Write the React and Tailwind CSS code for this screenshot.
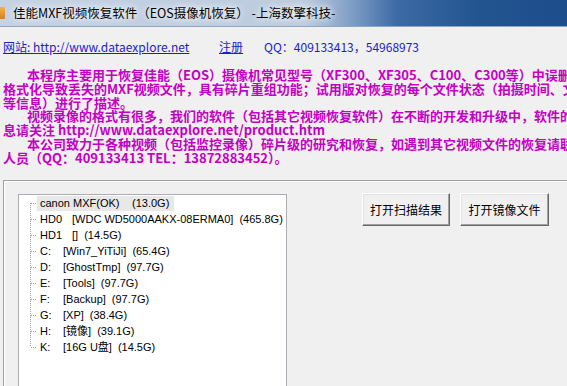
import React from 'react';

const cjk = "font-['Noto_Sans_CJK_SC',sans-serif]";
const ui = "font-['Liberation_Sans','Noto_Sans_CJK_SC',sans-serif]";

const paraLines = [
  { indent: true, text: '本程序主要用于恢复佳能（EOS）摄像机常见型号（XF300、XF305、C100、C300等）中误删除、格式化' },
  { indent: false, text: '格式化导致丢失的MXF视频文件，具有碎片重组功能；试用版对恢复的每个文件状态（拍摄时间、文件大小' },
  { indent: false, text: '等信息）进行了描述。' },
  { indent: true, text: '视频录像的格式有很多，我们的软件（包括其它视频恢复软件）在不断的开发和升级中，软件的最新信' },
  { indent: false, text: '息请关注 http://www.dataexplore.net/product.htm' },
  { indent: true, text: '本公司致力于各种视频（包括监控录像）碎片级的研究和恢复，如遇到其它视频文件的恢复请联系技术' },
  { indent: false, text: '人员（QQ：409133413 TEL：13872883452）。' }
];

const drives = [
  { name: 'canon MXF(OK)', label: '', size: '(13.0G)', nameW: 'w-[92px]', selected: true },
  { name: 'HD0', label: '[WDC WD5000AAKX-08ERMA0]', size: '(465.8G)', nameW: 'w-[32px]' },
  { name: 'HD1', label: '[]', size: '(14.5G)', nameW: 'w-[32px]' },
  { name: 'C:', label: '[Win7_YiTiJi]', size: '(65.4G)', nameW: 'w-[23px]' },
  { name: 'D:', label: '[GhostTmp]', size: '(97.7G)', nameW: 'w-[23px]' },
  { name: 'E:', label: '[Tools]', size: '(97.7G)', nameW: 'w-[23px]' },
  { name: 'F:', label: '[Backup]', size: '(97.7G)', nameW: 'w-[23px]' },
  { name: 'G:', label: '[XP]', size: '(38.4G)', nameW: 'w-[23px]' },
  { name: 'H:', label: '[镜像]', size: '(39.1G)', nameW: 'w-[23px]' },
  { name: 'K:', label: '[16G U盘]', size: '(14.5G)', nameW: 'w-[23px]' }
];

// dotted tree connector for one row
function Connector({ first, last }) {
  const y1 = first ? 8 : 0;
  const y2 = last ? 8 : 16;
  return (
    <svg width="7" height="16" className="shrink-0" shapeRendering="crispEdges">
      <line x1="0.5" y1={y1} x2="0.5" y2={y2} stroke="#a0a0a0" strokeDasharray="1 1" />
      <line x1="1" y1="8.5" x2="7" y2="8.5" stroke="#a0a0a0" strokeDasharray="1 1" />
    </svg>
  );
}

function WinButton({ children, w }) {
  return (
    <button
      className={`${w} h-[33px] bg-[#f0f0f0] border border-t-white border-l-white border-r-[#696969] border-b-[#696969] shadow-[inset_-1px_-1px_0_#a0a0a0,inset_1px_1px_0_#e3e3e3] text-[12px] text-black ${cjk}`}
    >
      {children}
    </button>
  );
}

export default function App() {
  return (
    <div className="w-[567px] h-[386px] overflow-hidden bg-[#f0f0f0] flex flex-col">
      {/* Title bar */}
      <div className="h-[27px] shrink-0 flex items-center border-b border-[#8fa6c2] bg-[linear-gradient(to_right,#c4d2e3_0%,#bccbde_54%,#7f9ec6_62%,#3d6aa5_70%,#235590_84%,#1d4d8b_100%)]">
        <div className="w-[5px] h-[12px] bg-[linear-gradient(to_bottom,#f3b54a,#d77f1c)] rounded-r-[1px]" />
        <span className={`ml-[8px] text-[12.5px] text-black whitespace-nowrap [text-shadow:0_0_6px_#fff,0_0_10px_#fff] ${cjk}`}>
          佳能MXF视频恢复软件（EOS摄像机恢复） -上海数擎科技-
        </span>
      </div>

      {/* Links row */}
      <div className={`mt-[13px] ml-[3px] h-[14px] leading-[14px] text-[12px] flex whitespace-nowrap text-[#1c1cc8] ${cjk}`}>
        <span className="underline w-[216px]">网站: http://www.dataexplore.net</span>
        <span className="underline w-[45px]">注册</span>
        <span>QQ：409133413，54968973</span>
      </div>

      {/* Description */}
      <div className={`mt-[14px] ml-[3px] text-[13px] leading-[13.75px] font-bold text-[#c400c4] whitespace-nowrap ${cjk}`}>
        {paraLines.map((l, i) => (
          <div key={i} className={l.indent ? 'pl-[24px]' : ''}>{l.text}</div>
        ))}
      </div>

      {/* Group frame */}
      <div className="mt-[16px] ml-[3px] flex-1 border-t border-l border-[#a0a0a0] shadow-[inset_1px_1px_0_#fff] flex items-start">
        <div className={`ml-[14px] mt-[13px] w-[269px] h-[220px] bg-white border border-[#abadb3] text-[11px] text-black ${ui}`}>
          <div className="pl-[11px]">
            {drives.map((d, i) => (
              <div key={i} className="flex items-center h-[16px] whitespace-nowrap">
                <Connector first={i === 0} last={i === drives.length - 1} />
                <div className={`flex items-center h-[15px] pl-[3px] pr-[5px] ${d.selected ? 'bg-[#e8e8e8]' : ''}`}>
                  <span className={d.nameW}>{d.name}</span>
                  {d.label && <span>{d.label}</span>}
                  <span className={d.label ? 'ml-[6px]' : ''}>{d.size}</span>
                </div>
              </div>
            ))}
          </div>
        </div>

        <div className="ml-[75px] mt-[12px] flex gap-[10px]">
          <WinButton w="w-[88px]">打开扫描结果</WinButton>
          <WinButton w="w-[89px]">打开镜像文件</WinButton>
        </div>
      </div>
    </div>
  );
}
